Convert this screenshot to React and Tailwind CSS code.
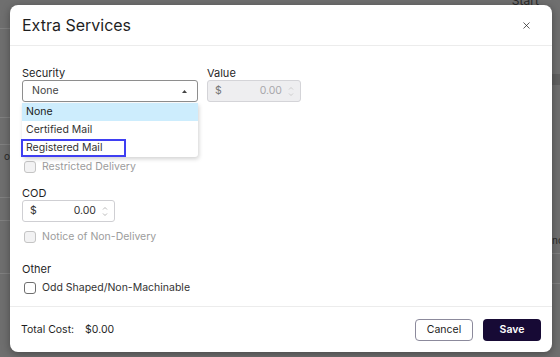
import { X } from 'lucide-react';

const font = { fontFamily: 'Inter, "Noto Sans", sans-serif' };

const Checkbox = ({ label, disabled }) => (
  <label className="flex h-[14px] items-center gap-[6px] pl-[2px]">
    <span
      className={
        disabled
          ? 'h-[12px] w-[12px] rounded-[3px] border border-[#c4c4c4] bg-[#f2f2f3]'
          : 'h-[12px] w-[12px] rounded-[3px] border border-[#6f6f6f] bg-white'
      }
    />
    <span className={disabled ? 'text-[10.5px] text-[#9c9c9c]' : 'text-[10.5px] text-[#333]'}>{label}</span>
  </label>
);

const Spinner = ({ light }) => (
  <svg width="6" height="11" viewBox="0 0 6 11" className={light ? 'text-[#c8c8c8]' : 'text-[#b0b0b0]'}>
    <path d="M1 3.5 L3 1.5 L5 3.5" fill="none" stroke="currentColor" strokeWidth="0.9" />
    <path d="M1 7.5 L3 9.5 L5 7.5" fill="none" stroke="currentColor" strokeWidth="0.9" />
  </svg>
);

const MoneyInput = ({ disabled, width }) => (
  <div
    className={[
      'flex h-[22px] items-center rounded-[3px] border pl-[7px] pr-[6px] text-[10.5px]',
      width,
      disabled ? 'border-[#d4d4d8] bg-[#eeeef0] text-[#a8a8ac]' : 'border-[#cfcfd3] bg-white text-[#333]'
    ].join(' ')}
  >
    <span className={disabled ? 'text-[#777]' : 'text-[#333]'}>$</span>
    <span className="ml-auto mr-[6px]">0.00</span>
    <Spinner light={disabled} />
  </div>
);

export default function App() {
  return (
    <div className="relative h-[357px] w-[560px] overflow-hidden bg-[#6f6f6f]" style={font}>
      {/* page behind the overlay */}
      <div className="absolute left-0 top-[28px] h-px w-[10px] bg-[#808080]" />
      <div className="absolute left-0 top-[117px] h-px w-[10px] bg-[#808080]" />
      <div className="absolute left-0 top-[144px] h-px w-[10px] bg-[#808080]" />
      <div className="absolute left-[4px] top-[149px] text-[10px] text-[#2a2a2a]">o</div>
      <div className="absolute left-0 top-[197px] h-px w-[10px] bg-[#808080]" />
      <div className="absolute left-0 top-[220px] h-px w-[10px] bg-[#808080]" />
      <div className="absolute left-0 top-[273px] h-px w-[10px] bg-[#808080]" />
      <div className="absolute left-[495px] top-[-8px] flex items-center gap-[8px] text-[12px] text-[#2a2a2a]">
        <span>C</span>
        <span>Start Over</span>
      </div>
      <div className="absolute left-[552px] top-[74px] h-[11px] w-[8px] bg-[#606060]" />
      <div className="absolute left-[552px] top-[233px] text-[10px] text-[#2a2a2a]">nc</div>
      <div className="absolute left-[552px] top-[253px] h-px w-[8px] bg-[#808080]" />
      <div className="absolute left-[552px] top-[283px] h-px w-[8px] bg-[#808080]" />

      {/* modal */}
      <div className="absolute left-[10px] top-[5px] flex h-[347px] w-[542px] flex-col rounded-[8px] bg-white shadow-[0_2px_8px_rgba(0,0,0,0.35)]">
        <div className="flex h-[41px] items-center justify-between border-b border-[#ececec] pl-[12px] pr-[20px]">
          <h2 className="text-[16px] text-[#1f1f1f]">Extra Services</h2>
          <X size={11} strokeWidth={1.6} className="text-[#222]" />
        </div>

        <div className="flex flex-1 flex-col px-[12px] pt-[20px]">
          <div className="flex gap-[9px]">
            <div className="relative flex w-[176px] flex-col">
              <span className="h-[14px] text-[11px] leading-[14px] text-[#1f1f1f]">Security</span>
              <div className="flex h-[22px] items-center justify-between rounded-[3px] border border-[#8e8e8e] pl-[9px] pr-[10px] text-[10.5px] text-[#444]">
                <span>None</span>
                <svg width="5" height="3" viewBox="0 0 5 3">
                  <path d="M0 3 L2.5 0 L5 3 Z" fill="#444" />
                </svg>
              </div>
              <div className="absolute left-0 top-[37px] z-10 flex w-[176px] flex-col rounded-b-[3px] bg-white text-[10.5px] text-[#333] shadow-[1px_2px_4px_rgba(0,0,0,0.18)]">
                <div className="flex h-[18px] items-center bg-[#cdedfd] pl-[4px] text-[#1a1a1a]">None</div>
                <div className="flex h-[18px] items-center pl-[4px]">Certified Mail</div>
                <div className="flex h-[18px] items-center">
                  <span className="-ml-[1px] flex h-[18px] w-[105px] items-center border-2 border-[#3f3ff2] pl-[3px]">
                    Registered Mail
                  </span>
                </div>
              </div>
            </div>
            <div className="flex w-[94px] flex-col">
              <span className="h-[14px] text-[11px] leading-[14px] text-[#1f1f1f]">Value</span>
              <MoneyInput disabled width="w-[94px]" />
            </div>
          </div>

          <div className="mt-[58px]">
            <Checkbox label="Restricted Delivery" disabled />
          </div>

          <span className="mt-[12px] h-[14px] text-[11px] leading-[14px] text-[#1f1f1f]">COD</span>
          <MoneyInput width="w-[93px]" />

          <div className="mt-[8px]">
            <Checkbox label="Notice of Non-Delivery" disabled />
          </div>

          <span className="mt-[18px] h-[14px] text-[11px] leading-[14px] text-[#1f1f1f]">Other</span>
          <div className="mt-[5px]">
            <Checkbox label="Odd Shaped/Non-Machinable" />
          </div>
        </div>

        <div className="flex h-[46px] items-center border-t border-[#ececec] pl-[11px] pr-[11px] text-[10.5px] text-[#1f1f1f]">
          <span>Total Cost:</span>
          <span className="ml-[11px]">$0.00</span>
          <button className="ml-auto h-[22px] w-[58px] rounded-[4px] border border-[#8c8a9c] bg-white text-[10.5px] text-[#222]">
            Cancel
          </button>
          <button className="ml-[10px] h-[22px] w-[58px] rounded-[4px] bg-[#170a35] text-[10.5px] font-semibold text-white">
            Save
          </button>
        </div>
      </div>
    </div>
  );
}
